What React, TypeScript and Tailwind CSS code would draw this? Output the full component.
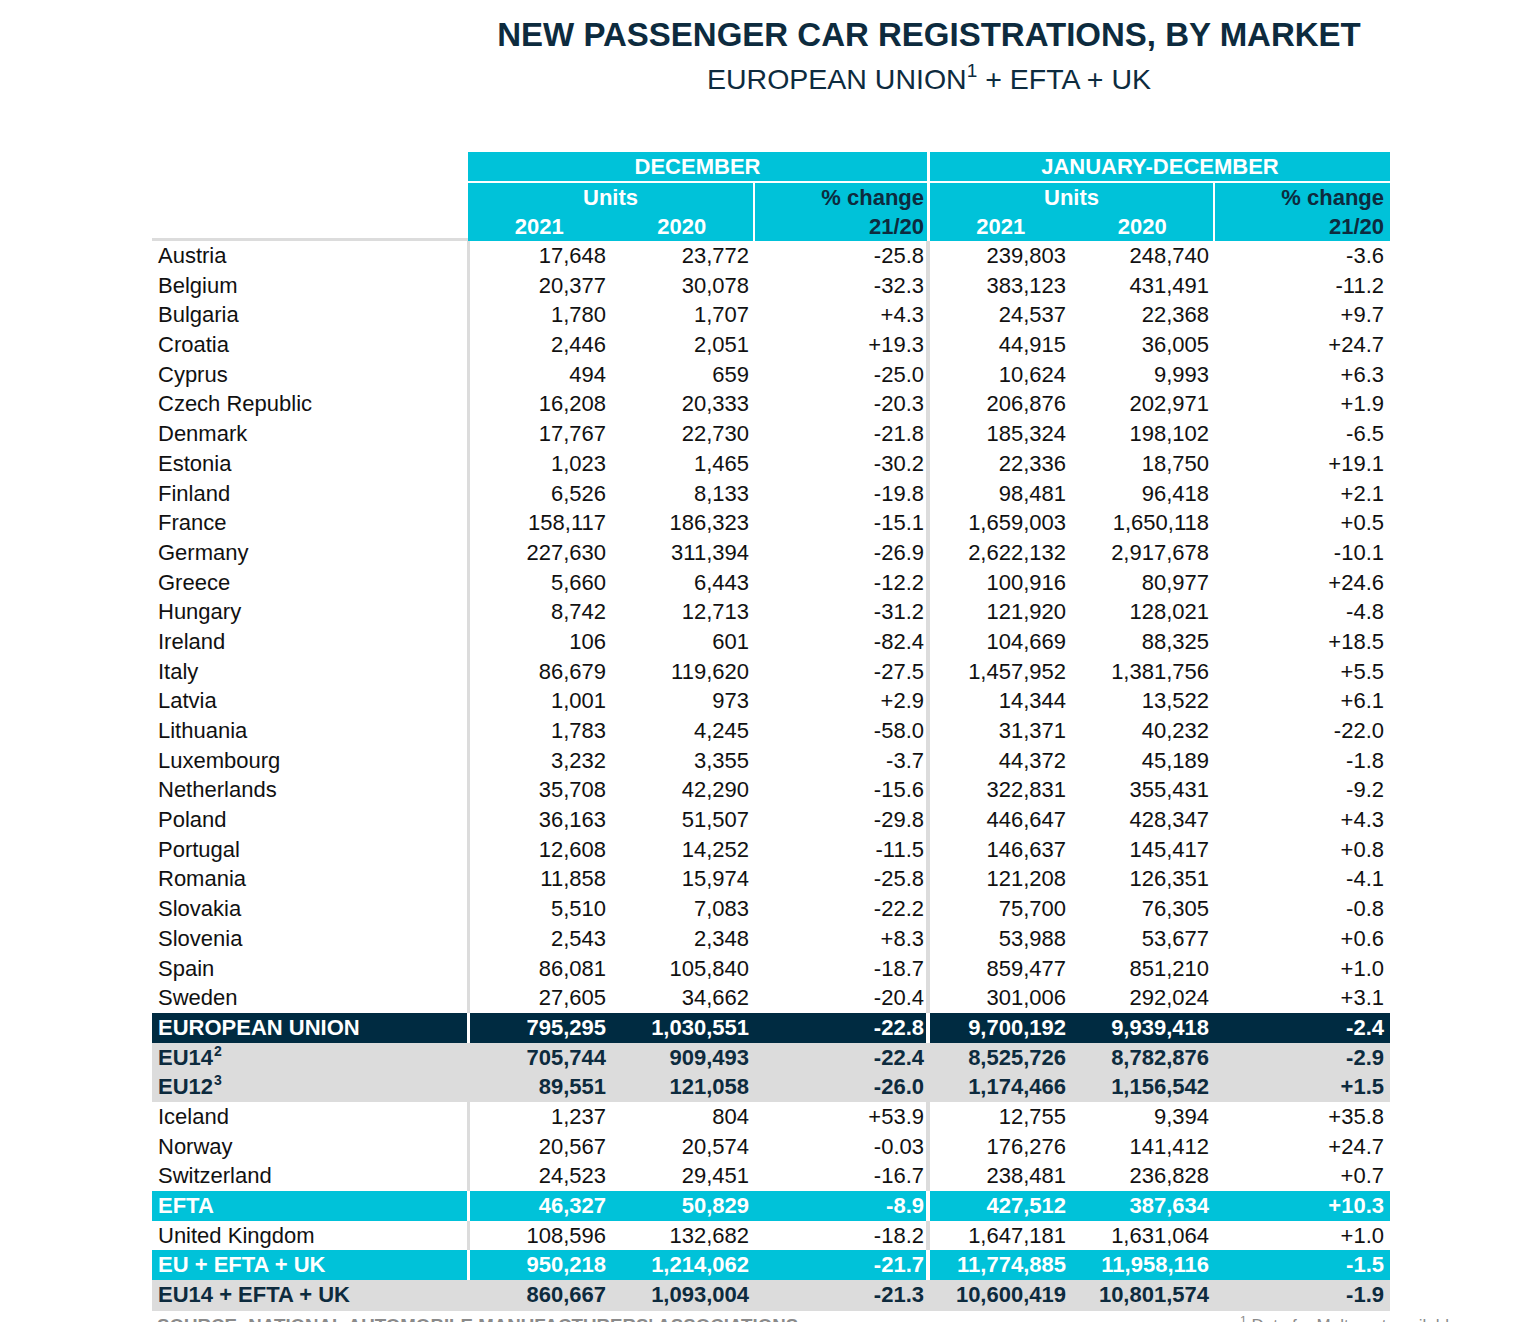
type Kind = 'plain' | 'eu' | 'sub' | 'cyan' | 'total';

type Row = {
  label: string;
  sup?: string;
  kind: Kind;
  v: string[];
};

const rows: Row[] = [
  { label: 'Austria', kind: 'plain', v: ['17,648', '23,772', '-25.8', '239,803', '248,740', '-3.6'] },
  { label: 'Belgium', kind: 'plain', v: ['20,377', '30,078', '-32.3', '383,123', '431,491', '-11.2'] },
  { label: 'Bulgaria', kind: 'plain', v: ['1,780', '1,707', '+4.3', '24,537', '22,368', '+9.7'] },
  { label: 'Croatia', kind: 'plain', v: ['2,446', '2,051', '+19.3', '44,915', '36,005', '+24.7'] },
  { label: 'Cyprus', kind: 'plain', v: ['494', '659', '-25.0', '10,624', '9,993', '+6.3'] },
  { label: 'Czech Republic', kind: 'plain', v: ['16,208', '20,333', '-20.3', '206,876', '202,971', '+1.9'] },
  { label: 'Denmark', kind: 'plain', v: ['17,767', '22,730', '-21.8', '185,324', '198,102', '-6.5'] },
  { label: 'Estonia', kind: 'plain', v: ['1,023', '1,465', '-30.2', '22,336', '18,750', '+19.1'] },
  { label: 'Finland', kind: 'plain', v: ['6,526', '8,133', '-19.8', '98,481', '96,418', '+2.1'] },
  { label: 'France', kind: 'plain', v: ['158,117', '186,323', '-15.1', '1,659,003', '1,650,118', '+0.5'] },
  { label: 'Germany', kind: 'plain', v: ['227,630', '311,394', '-26.9', '2,622,132', '2,917,678', '-10.1'] },
  { label: 'Greece', kind: 'plain', v: ['5,660', '6,443', '-12.2', '100,916', '80,977', '+24.6'] },
  { label: 'Hungary', kind: 'plain', v: ['8,742', '12,713', '-31.2', '121,920', '128,021', '-4.8'] },
  { label: 'Ireland', kind: 'plain', v: ['106', '601', '-82.4', '104,669', '88,325', '+18.5'] },
  { label: 'Italy', kind: 'plain', v: ['86,679', '119,620', '-27.5', '1,457,952', '1,381,756', '+5.5'] },
  { label: 'Latvia', kind: 'plain', v: ['1,001', '973', '+2.9', '14,344', '13,522', '+6.1'] },
  { label: 'Lithuania', kind: 'plain', v: ['1,783', '4,245', '-58.0', '31,371', '40,232', '-22.0'] },
  { label: 'Luxembourg', kind: 'plain', v: ['3,232', '3,355', '-3.7', '44,372', '45,189', '-1.8'] },
  { label: 'Netherlands', kind: 'plain', v: ['35,708', '42,290', '-15.6', '322,831', '355,431', '-9.2'] },
  { label: 'Poland', kind: 'plain', v: ['36,163', '51,507', '-29.8', '446,647', '428,347', '+4.3'] },
  { label: 'Portugal', kind: 'plain', v: ['12,608', '14,252', '-11.5', '146,637', '145,417', '+0.8'] },
  { label: 'Romania', kind: 'plain', v: ['11,858', '15,974', '-25.8', '121,208', '126,351', '-4.1'] },
  { label: 'Slovakia', kind: 'plain', v: ['5,510', '7,083', '-22.2', '75,700', '76,305', '-0.8'] },
  { label: 'Slovenia', kind: 'plain', v: ['2,543', '2,348', '+8.3', '53,988', '53,677', '+0.6'] },
  { label: 'Spain', kind: 'plain', v: ['86,081', '105,840', '-18.7', '859,477', '851,210', '+1.0'] },
  { label: 'Sweden', kind: 'plain', v: ['27,605', '34,662', '-20.4', '301,006', '292,024', '+3.1'] },
  { label: 'EUROPEAN UNION', kind: 'eu', v: ['795,295', '1,030,551', '-22.8', '9,700,192', '9,939,418', '-2.4'] },
  { label: 'EU14', sup: '2', kind: 'sub', v: ['705,744', '909,493', '-22.4', '8,525,726', '8,782,876', '-2.9'] },
  { label: 'EU12', sup: '3', kind: 'sub', v: ['89,551', '121,058', '-26.0', '1,174,466', '1,156,542', '+1.5'] },
  { label: 'Iceland', kind: 'plain', v: ['1,237', '804', '+53.9', '12,755', '9,394', '+35.8'] },
  { label: 'Norway', kind: 'plain', v: ['20,567', '20,574', '-0.03', '176,276', '141,412', '+24.7'] },
  { label: 'Switzerland', kind: 'plain', v: ['24,523', '29,451', '-16.7', '238,481', '236,828', '+0.7'] },
  { label: 'EFTA', kind: 'cyan', v: ['46,327', '50,829', '-8.9', '427,512', '387,634', '+10.3'] },
  { label: 'United Kingdom', kind: 'plain', v: ['108,596', '132,682', '-18.2', '1,647,181', '1,631,064', '+1.0'] },
  { label: 'EU + EFTA + UK', kind: 'cyan', v: ['950,218', '1,214,062', '-21.7', '11,774,885', '11,958,116', '-1.5'] },
  { label: 'EU14 + EFTA + UK', kind: 'total', v: ['860,667', '1,093,004', '-21.3', '10,600,419', '10,801,574', '-1.9'] },
];

// colours per row kind: cell bg + text, and the vertical separator
const rowStyle: Record<Kind, { cell: string; sep: string }> = {
  plain: { cell: 'bg-white text-[#111111] font-normal', sep: 'bg-[#dcdcdc]' },
  eu: { cell: 'bg-[#002b41] text-white font-bold', sep: 'bg-white' },
  sub: { cell: 'bg-[#dcdcdc] text-[#0d2b3e] font-bold', sep: 'bg-[#dcdcdc]' },
  cyan: { cell: 'bg-[#00c2d9] text-white font-bold', sep: 'bg-white' },
  total: { cell: 'bg-[#dcdcdc] text-[#0d2b3e] font-bold', sep: 'bg-[#dcdcdc]' },
};

function TableRow({ row }: { row: Row }) {
  const s = rowStyle[row.kind];
  const h = row.kind === 'total' ? 'h-[30.5px]' : 'h-[29.7px]';
  return (
    <div className={`flex ${h} text-[22px] leading-[29.7px]`}>
      <div className={`w-[315px] pl-[6px] whitespace-nowrap ${s.cell}`}>
        {row.label}
        {row.sup && <sup className="text-[14px] relative -top-[9px] ml-[1px]">{row.sup}</sup>}
      </div>
      <div className={`w-[3px] ${s.sep}`} />
      <div className={`flex w-[456px] ${s.cell}`}>
        <div className="w-[141px] text-right pr-[5px]">{row.v[0]}</div>
        <div className="w-[142px] text-right pr-[4px]">{row.v[1]}</div>
        <div className="w-[173px] text-right pr-[2px]">{row.v[2]}</div>
      </div>
      <div className={`w-[4px] ${s.sep}`} />
      <div className={`flex w-[460px] ${s.cell}`}>
        <div className="w-[141px] text-right pr-[5px]">{row.v[3]}</div>
        <div className="w-[142px] text-right pr-[4px]">{row.v[4]}</div>
        <div className="w-[177px] text-right pr-[6px]">{row.v[5]}</div>
      </div>
    </div>
  );
}

function PeriodHeader({ title, unitsW, pctW, pctPr }: { title: string; unitsW: string; pctW: string; pctPr: string }) {
  return (
    <div className="flex flex-col gap-[2px]">
      <div className="h-[29px] bg-[#00c2d9] text-white font-bold text-center leading-[29px]">{title}</div>
      <div className="flex gap-[2px] h-[58px]">
        <div className={`${unitsW} bg-[#00c2d9] text-white font-bold`}>
          <div className="h-[30px] leading-[30px] text-center">Units</div>
          <div className="flex h-[28px] leading-[28px]">
            <div className="flex-1 text-center">2021</div>
            <div className="flex-1 text-center">2020</div>
          </div>
        </div>
        <div className={`${pctW} ${pctPr} bg-[#00c2d9] text-[#0d2b3e] font-bold text-right`}>
          <div className="h-[30px] leading-[30px]">% change</div>
          <div className="h-[28px] leading-[28px]">21/20</div>
        </div>
      </div>
    </div>
  );
}

export default function App() {
  return (
    <div className="h-[1322px] overflow-hidden bg-white font-['Liberation_Sans',Arial,sans-serif]">
      <div className="ml-[152px] w-[1238px]">
        {/* Title */}
        <div className="pl-[316px] text-center text-[#0d2b3e]">
          <div className="mt-[15px] text-[33px] leading-[40px] font-bold whitespace-nowrap">
            NEW PASSENGER CAR REGISTRATIONS, BY MARKET
          </div>
          <div className="mt-[6px] text-[28.5px] leading-[36px] whitespace-nowrap">
            EUROPEAN UNION<sup className="text-[19px] relative -top-[12px]">1</sup> + EFTA + UK
          </div>
        </div>

        {/* Header */}
        <div className="mt-[55px] flex text-[22px]">
          <div className="w-[316px] border-b-[3px] border-[#dcdcdc]" />
          <div className="w-[459px]">
            <PeriodHeader title="DECEMBER" unitsW="w-[285px]" pctW="w-[172px]" pctPr="pr-[3px]" />
          </div>
          <div className="w-[3px]" />
          <div className="w-[460px]">
            <PeriodHeader title="JANUARY-DECEMBER" unitsW="w-[283px]" pctW="w-[175px]" pctPr="pr-[6px]" />
          </div>
        </div>

        {/* Body */}
        <div className="flex flex-col">
          {rows.map((r) => (
            <TableRow key={r.label} row={r} />
          ))}
        </div>

        {/* Footer */}
        <div className="mt-[5px] flex text-[18.7px] leading-[20px] text-[#8a8a8a] whitespace-nowrap">
          <div className="w-[1088px] shrink-0 pl-[5px] font-bold">SOURCE: NATIONAL AUTOMOBILE MANUFACTURERS' ASSOCIATIONS</div>
          <div className="shrink-0 text-[17px]">
            <sup className="text-[12px] relative -top-[6px]">1</sup> Data for Malta not available
          </div>
        </div>
      </div>
    </div>
  );
}
